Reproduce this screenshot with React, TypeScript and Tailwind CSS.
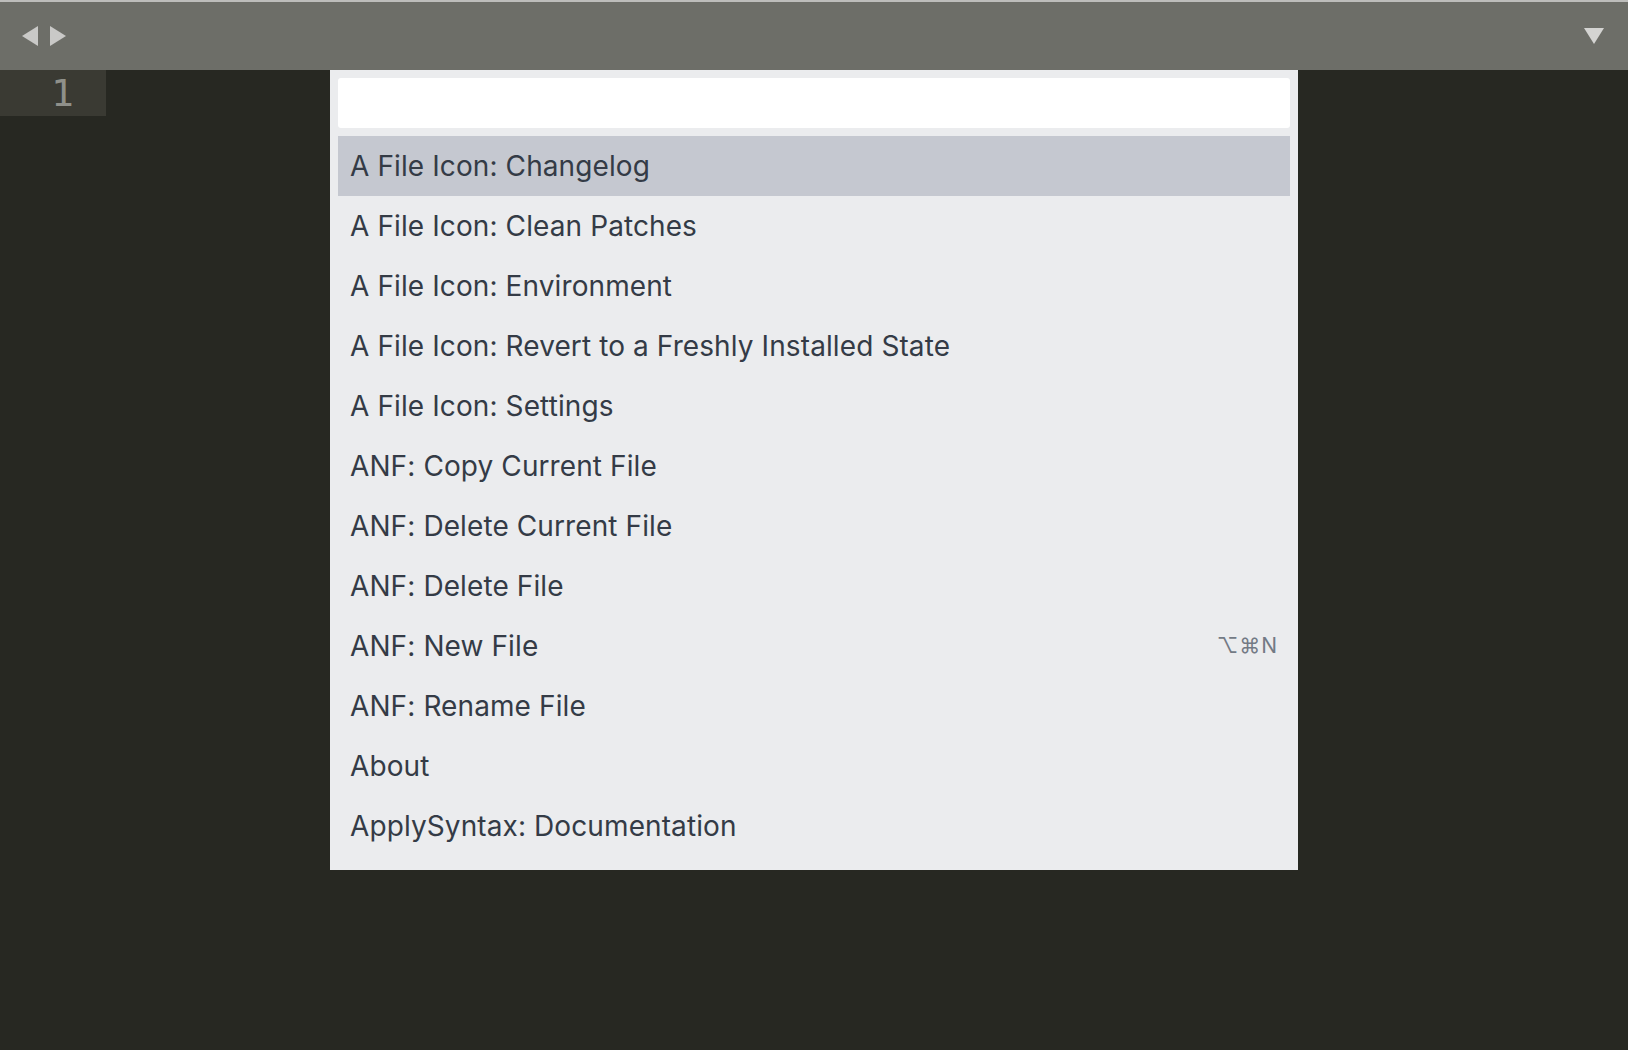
import React from 'react';

const commands: { label: string; shortcut?: string }[] = [
  { label: 'A File Icon: Changelog' },
  { label: 'A File Icon: Clean Patches' },
  { label: 'A File Icon: Environment' },
  { label: 'A File Icon: Revert to a Freshly Installed State' },
  { label: 'A File Icon: Settings' },
  { label: 'ANF: Copy Current File' },
  { label: 'ANF: Delete Current File' },
  { label: 'ANF: Delete File' },
  { label: 'ANF: New File', shortcut: '⌥⌘N' },
  { label: 'ANF: Rename File' },
  { label: 'About' },
  { label: 'ApplySyntax: Documentation' },
];

const App: React.FC = () => {
  return (
    <div
      className="w-[1628px] h-[1050px] flex flex-col bg-[#272822] overflow-hidden"
      style={{ fontFamily: 'Inter, "Noto Sans", sans-serif' }}
    >
      {/* Tab bar */}
      <div className="h-[70px] shrink-0 bg-[#6d6e68] border-t-2 border-[#bdbdbb] flex items-center justify-between pl-[22px] pr-[24px]">
        <div className="flex items-center gap-[12px]">
          <svg width="16" height="20" viewBox="0 0 16 20">
            <polygon points="16,0 16,20 0,10" fill="#c9c9c7" />
          </svg>
          <svg width="16" height="20" viewBox="0 0 16 20">
            <polygon points="0,0 0,20 16,10" fill="#c9c9c7" />
          </svg>
        </div>
        <svg width="20" height="16" viewBox="0 0 20 16">
          <polygon points="0,0 20,0 10,16" fill="#d4d4d2" />
        </svg>
      </div>

      {/* Editor area */}
      <div className="flex-1 flex relative">
        <div className="w-[106px] h-[46px] bg-[#3a3a33] flex items-center justify-end pr-[32px]">
          <span className="text-[38px] leading-none text-[#8f908a]" style={{ fontFamily: '"DejaVu Sans Mono", monospace' }}>
            1
          </span>
        </div>

        {/* Command palette overlay */}
        <div className="absolute left-[330px] top-0 w-[968px] bg-[#ebecee] px-[8px] pt-[8px] pb-[14px]">
          <div className="h-[50px] bg-white rounded-[3px]" />
          <div className="mt-[8px] flex flex-col">
            {commands.map((c, i) => (
              <div
                key={c.label}
                className={`h-[60px] flex items-center justify-between pl-[12px] pr-[12px] ${
                  i === 0 ? 'bg-[#c5c8d0]' : ''
                }`}
              >
                <span className="text-[28px] text-[#343b46] tracking-[0.1px]">{c.label}</span>
                {c.shortcut && (
                  <span className="text-[21px] text-[#737a85] tracking-[1px]">{c.shortcut}</span>
                )}
              </div>
            ))}
          </div>
        </div>
      </div>
    </div>
  );
};

export default App;
